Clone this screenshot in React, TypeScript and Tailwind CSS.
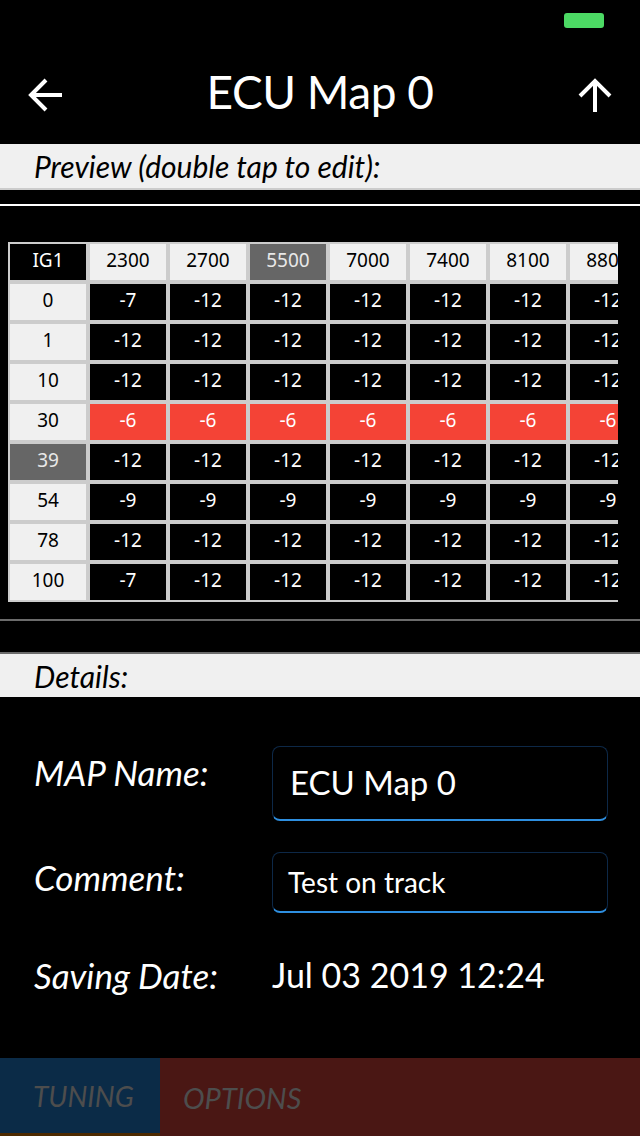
import React from "react";

const cols = ["2300", "2700", "5500", "7000", "7400", "8100", "8800"];
const rows: { h: string; v: string[]; red?: boolean; sel?: boolean }[] = [
  { h: "0", v: ["-7", "-12", "-12", "-12", "-12", "-12", "-12"] },
  { h: "1", v: ["-12", "-12", "-12", "-12", "-12", "-12", "-12"] },
  { h: "10", v: ["-12", "-12", "-12", "-12", "-12", "-12", "-12"] },
  { h: "30", v: ["-6", "-6", "-6", "-6", "-6", "-6", "-6"], red: true },
  { h: "39", v: ["-12", "-12", "-12", "-12", "-12", "-12", "-12"], sel: true },
  { h: "54", v: ["-9", "-9", "-9", "-9", "-9", "-9", "-9"] },
  { h: "78", v: ["-12", "-12", "-12", "-12", "-12", "-12", "-12"] },
  { h: "100", v: ["-7", "-12", "-12", "-12", "-12", "-12", "-12"] },
];

const ui = { fontFamily: "Lato, 'Open Sans', sans-serif" };
const tbl = { fontFamily: "'Noto Sans', 'Open Sans', sans-serif" };

const cellBase = "w-[76px] h-[36px] shrink-0 flex items-center justify-center text-[19px] pb-[4px] whitespace-nowrap";

export default function App() {
  return (
    <div className="w-[640px] h-[1136px] bg-black flex flex-col overflow-hidden text-white" style={ui}>
      {/* status bar */}
      <div className="h-[40px] flex justify-end items-start pt-[13px] pr-[36px] shrink-0">
        <div className="w-[40px] h-[15px] rounded-[3px] bg-[#4cd964]" />
      </div>
      {/* header */}
      <div className="h-[104px] shrink-0 flex items-center justify-between px-[28px] pt-[6px]">
        <svg width="34" height="34" viewBox="0 0 34 34" fill="none" stroke="white" strokeWidth="4">
          <path d="M3 17 H34" />
          <path d="M18 2 L3 17 L18 32" />
        </svg>
        <div className="text-[46px] leading-none font-normal tracking-[-0.5px] mb-[6px]">ECU Map 0</div>
        <svg width="34" height="34" viewBox="0 0 34 34" fill="none" stroke="white" strokeWidth="4">
          <path d="M17 3 V34" />
          <path d="M2 18 L17 3 L32 18" />
        </svg>
      </div>
      {/* preview bar */}
      <div className="h-[46px] shrink-0 bg-[#f0f0f0] border-b-2 border-[#cccccc] flex items-center pl-[34px]">
        <span className="italic text-black text-[30px] leading-none">Preview (double tap to edit):</span>
      </div>
      <div className="h-[14px] shrink-0" />
      <div className="h-[2px] shrink-0 bg-white" />
      <div className="h-[36px] shrink-0" />
      {/* table */}
      <div className="ml-[8px] w-[610px] overflow-hidden shrink-0" style={tbl}>
        <div className="w-max bg-[#cccccc] p-[2px] flex flex-col gap-[4px]">
          <div className="flex gap-[4px]">
            <div className={cellBase + " bg-black text-white"}>IG1</div>
            {cols.map((c, i) => (
              <div
                key={c}
                className={
                  i === 2
                    ? cellBase + " bg-[#666666] text-[#e8e8e8]"
                    : cellBase + " bg-[#f0f0f0] text-black"
                }
              >
                {c}
              </div>
            ))}
          </div>
          {rows.map((r) => (
            <div key={r.h} className="flex gap-[4px]">
              <div
                className={
                  r.sel
                    ? cellBase + " bg-[#666666] text-[#e8e8e8]"
                    : cellBase + " bg-[#f0f0f0] text-black"
                }
              >
                {r.h}
              </div>
              {r.v.map((v, i) => (
                <div
                  key={i}
                  className={
                    r.red
                      ? cellBase + " bg-[#f44336] text-white"
                      : cellBase + " bg-black text-white"
                  }
                >
                  {v}
                </div>
              ))}
            </div>
          ))}
        </div>
      </div>
      <div className="h-[17px] shrink-0" />
      <div className="h-[2px] shrink-0 bg-[#6b6b6b]" />
      <div className="h-[31px] shrink-0" />
      <div className="h-[2px] shrink-0 bg-[#6b6b6b]" />
      {/* details bar */}
      <div className="h-[43px] shrink-0 bg-[#f0f0f0] flex items-center pl-[34px]">
        <span className="italic text-black text-[30px] leading-none">Details:</span>
      </div>
      {/* details content */}
      <div className="flex-1 flex flex-col pt-[49px]">
        <div className="flex items-start">
          <div className="w-[272px] shrink-0 pl-[34px] pt-[6px] italic text-[35px] leading-[40px] whitespace-nowrap">MAP Name:</div>
          <div className="w-[336px] h-[75px] rounded-[8px] border border-[#0d2847] border-b-2 border-b-[#2e8fe0] flex items-center pl-[17px] pb-[2px]">
            <span className="text-[33px] leading-none">ECU Map 0</span>
          </div>
        </div>
        <div className="flex items-start mt-[31px]">
          <div className="w-[272px] shrink-0 pl-[34px] pt-[5px] italic text-[35px] leading-[40px] whitespace-nowrap">Comment:</div>
          <div className="w-[336px] h-[61px] rounded-[8px] border border-[#0d2847] border-b-2 border-b-[#2e8fe0] flex items-center pl-[15px]">
            <span className="text-[28px] leading-none">Test on track</span>
          </div>
        </div>
        <div className="flex items-center mt-[42px]">
          <div className="w-[272px] shrink-0 pl-[34px] italic text-[35px] leading-[40px] whitespace-nowrap">Saving Date:</div>
          <div className="text-[34px] leading-[40px] whitespace-nowrap">Jul 03 2019 12:24</div>
        </div>
      </div>
      {/* bottom tabs */}
      <div className="h-[78px] shrink-0 flex">
        <div className="w-[160px] bg-[#0b2b47] border-b-[3px] border-[#4d2a00] flex items-center pl-[33px]">
          <span className="italic text-[28px] leading-none text-[#4d4d4d]">TUNING</span>
        </div>
        <div className="flex-1 bg-[#4a1714] flex items-center pl-[23px]">
          <span className="italic text-[29px] leading-none text-[#4d4d4d]">OPTIONS</span>
        </div>
      </div>
    </div>
  );
}
